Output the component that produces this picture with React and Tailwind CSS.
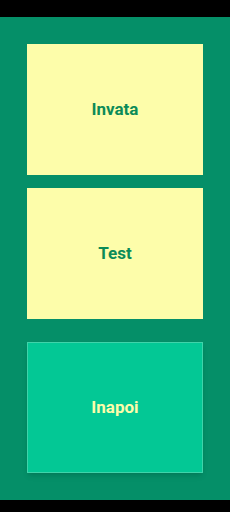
export default function App() {
  return (
    <div className="w-[230px] h-[512px] flex flex-col bg-black" style={{ fontFamily: 'Roboto, "Liberation Sans", sans-serif' }}>
      <div className="h-[17px] shrink-0 bg-black" />
      <div className="h-[483px] shrink-0 bg-[#058f68] px-[27px] pt-[27px] flex flex-col">
        <button className="h-[131px] w-[176px] bg-[#fdfdaa] text-[#0c8b58] font-bold text-[17px] flex items-center justify-center">
          Invata
        </button>
        <button className="mt-[13px] h-[131px] w-[176px] bg-[#fdfdaa] text-[#0c8b58] font-bold text-[17px] flex items-center justify-center">
          Test
        </button>
        <button className="mt-[23px] h-[131px] w-[176px] bg-[#03c895] border border-[#3fd4aa] text-[#fdfdaa] font-bold text-[17px] flex items-center justify-center shadow-md">
          Inapoi
        </button>
      </div>
      <div className="h-[12px] shrink-0 bg-black" />
    </div>
  );
}
